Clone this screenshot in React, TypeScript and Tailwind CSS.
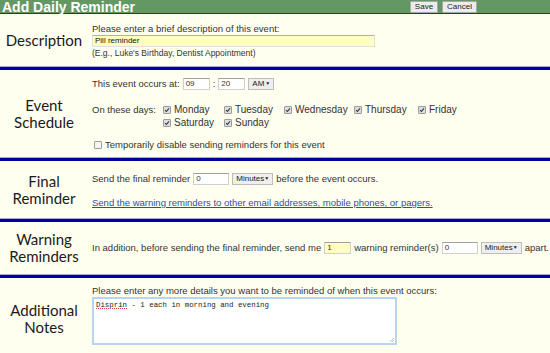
import React from "react";

const body = { fontFamily: '"Liberation Sans", Arial, sans-serif' };
const labelFont = { fontFamily: 'Lato, "Open Sans", sans-serif' };

function Check({ on = true }: { on?: boolean }) {
  return (
    <span
      className={`inline-flex h-[8px] w-[8px] shrink-0 items-center justify-center rounded-[1px] border border-[#9c9c9c] ${
        on ? "bg-[#dedede]" : "bg-[#f6f6f6]"
      }`}
    >
      {on && (
        <svg viewBox="0 0 8 8" className="h-[6px] w-[6px]">
          <path d="M1.4 4.3 L3.2 6 L6.6 1.8" stroke="#333" strokeWidth="1.4" fill="none" />
        </svg>
      )}
    </span>
  );
}

function Field({ value, w, yellow }: { value: string; w: string; yellow?: boolean }) {
  return (
    <span
      className={`inline-flex h-[12px] items-center border border-[#d0d0d0] border-t-[#a0a0a0] px-[2px] text-[8px] text-[#333] ${w} ${
        yellow ? "bg-[#ffffc4]" : "bg-white"
      }`}
    >
      {value}
    </span>
  );
}

function Dropdown({ label, w }: { label: string; w: string }) {
  return (
    <span
      className={`inline-flex h-[12px] items-center justify-between border border-[#bdbdbd] bg-[#efefef] px-[3px] text-[8px] text-[#222] ${w}`}
    >
      {label}
      <span className="text-[5px]">▼</span>
    </span>
  );
}

function Separator() {
  return <div className="h-[4px] border-t border-[#a8a8d8] bg-[#00009c]" />;
}

function Section({ label, h, children }: { label: React.ReactNode; h: string; children: React.ReactNode }) {
  return (
    <div className={`flex items-center ${h}`}>
      <div className="w-[88px] shrink-0 text-center text-[15px] leading-[17px] text-[#1a1a1a]" style={labelFont}>
        {label}
      </div>
      <div className="flex-1 pl-[4px]">{children}</div>
    </div>
  );
}

const days = [
  ["Monday", "Tuesday", "Wednesday", "Thursday", "Friday"],
  ["Saturday", "Sunday"],
];

export default function App() {
  return (
    <div className="h-[353px] w-[550px] overflow-hidden bg-[#fffff0] text-[9.5px] text-[#333]" style={body}>
      {/* title bar */}
      <div className="flex h-[14px] items-center justify-between border-b border-[#2a2aa0] bg-[#639864] pl-[2px] pr-[73px]">
        <h1 className="text-[14px] font-bold leading-[14px] text-white">Add Daily Reminder</h1>
        <div className="flex gap-[4px]">
          <button className="h-[12px] rounded-[1px] border border-[#a8a8a8] bg-[#ececec] px-[4px] text-[8px] leading-[10px] text-[#222]">
            Save
          </button>
          <button className="h-[12px] rounded-[1px] border border-[#a8a8a8] bg-[#ececec] px-[4px] text-[8px] leading-[10px] text-[#222]">
            Cancel
          </button>
        </div>
      </div>

      <Section label="Description" h="h-[52px]">
        <div className="pt-[1px]">
          <div className="leading-[11px]">Please enter a brief description of this event:</div>
          <div className="mt-[1px] flex h-[12px] w-[283px] items-center border border-[#e0e0e0] border-t-[#b0b0b0] bg-[#ffffc4] px-[2px] text-[8px] text-[#111]">
            Pill reminder
          </div>
          <div className="mt-[1px] text-[8.5px] leading-[10px]">(E.g., Luke's Birthday, Dentist Appointment)</div>
        </div>
      </Section>
      <Separator />

      <Section
        label={
          <>
            Event
            <br />
            Schedule
          </>
        }
        h="h-[87px]"
      >
        <div className="flex flex-col pt-[2px]">
          <div className="flex items-center gap-[3px]">
            <span>This event occurs at:</span>
            <Field value="09" w="w-[27px]" />
            <span>:</span>
            <Field value="20" w="w-[27px]" />
            <Dropdown label="AM" w="w-[26px]" />
          </div>
          <div className="mt-[12px] flex items-start">
            <span className="w-[71px] leading-[13px]">On these days:</span>
            <div className="grid grid-cols-[61px_60px_70px_64px_auto] gap-y-0">
              {days.flat().map((d) => (
                <span key={d} className="flex h-[13px] items-center gap-[3px] text-[10px]">
                  <Check />
                  {d}
                </span>
              ))}
            </div>
          </div>
          <div className="mt-[9px] flex items-center gap-[3px] pl-[2px]">
            <Check on={false} />
            <span>Temporarily disable sending reminders for this event</span>
          </div>
        </div>
      </Section>
      <Separator />

      <Section
        label={
          <>
            Final
            <br />
            Reminder
          </>
        }
        h="h-[57px]"
      >
        <div className="flex flex-col pt-[3px]">
          <div className="flex items-center gap-[3px]">
            <span>Send the final reminder</span>
            <Field value="0" w="w-[36px]" />
            <Dropdown label="Minutes" w="w-[41px]" />
            <span>before the event occurs.</span>
          </div>
          <a href="#" className="mt-[10px] text-[#2c4fa8] underline">
            Send the warning reminders to other email addresses, mobile phones, or pagers.
          </a>
        </div>
      </Section>
      <Separator />

      <Section
        label={
          <>
            Warning
            <br />
            Reminders
          </>
        }
        h="h-[52px]"
      >
        <div className="flex items-center gap-[3px] whitespace-nowrap">
          <span>In addition, before sending the final reminder, send me</span>
          <Field value="1" w="w-[27px]" yellow />
          <span>warning reminder(s)</span>
          <Field value="0" w="w-[36px]" />
          <Dropdown label="Minutes" w="w-[41px]" />
          <span>apart.</span>
        </div>
      </Section>
      <Separator />

      <Section
        label={
          <>
            Additional
            <br />
            Notes
          </>
        }
        h="h-[82px]"
      >
        <div className="pb-[8px]">
          <div className="leading-[11px]">
            Please enter any more details you want to be reminded of when this event occurs:
          </div>
          <div className="relative mt-[1px] h-[48px] w-[305px] border-2 border-[#b9d4ee] bg-white px-[2px] py-[2px] text-[7.4px] leading-[9px] text-[#222]" style={{ fontFamily: '"Liberation Mono", monospace' }}>
            <span className="underline decoration-[#e04040] decoration-dotted">Disprin</span> - 1 each in morning and evening
            <svg viewBox="0 0 6 6" className="absolute bottom-[1px] right-[1px] h-[5px] w-[5px]">
              <path d="M6 1 L1 6 M6 3.5 L3.5 6" stroke="#999" strokeWidth="0.8" />
            </svg>
          </div>
        </div>
      </Section>
    </div>
  );
}
